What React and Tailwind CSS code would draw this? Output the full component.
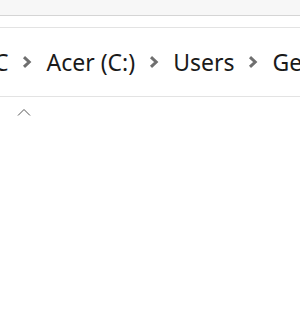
const Chevron = () => (
  <svg width="10" height="12" viewBox="0 0 10 12" className="shrink-0">
    <path d="M2 1.2 L7.2 6 L2 10.8" fill="none" stroke="#6f6f6f" strokeWidth="3" strokeLinecap="butt" strokeLinejoin="miter" />
  </svg>
);

const App = () => {
  const crumbs = ["Acer (C:)", "Users", "Gemini"];
  return (
    <div className="w-[300px] h-[329px] bg-white overflow-hidden flex flex-col" style={{ fontFamily: '"Noto Sans", "Open Sans", sans-serif' }}>
      <div className="h-[15px] bg-[#f7f7f7] border-b border-[#d5d5d5] box-content"></div>
      <div className="h-[11px]"></div>
      <div className="h-[68px] border-t border-b border-[#e3e3e3] box-content flex items-center whitespace-nowrap">
        <div className="flex items-center gap-[14px] -ml-[20px] text-[23px] text-[#1a1a1a]">
          <span>PC</span>
          {crumbs.map((c) => (
            <div key={c} className="flex items-center gap-[14px]">
              <Chevron />
              <span>{c}</span>
            </div>
          ))}
        </div>
      </div>
      <div className="pl-[17px] pt-[11px]">
        <svg width="14" height="8" viewBox="0 0 14 8">
          <path d="M1 7.5 L7 1.5 L13 7.5" fill="none" stroke="#555" strokeWidth="1" />
        </svg>
      </div>
    </div>
  );
};

export default App;
